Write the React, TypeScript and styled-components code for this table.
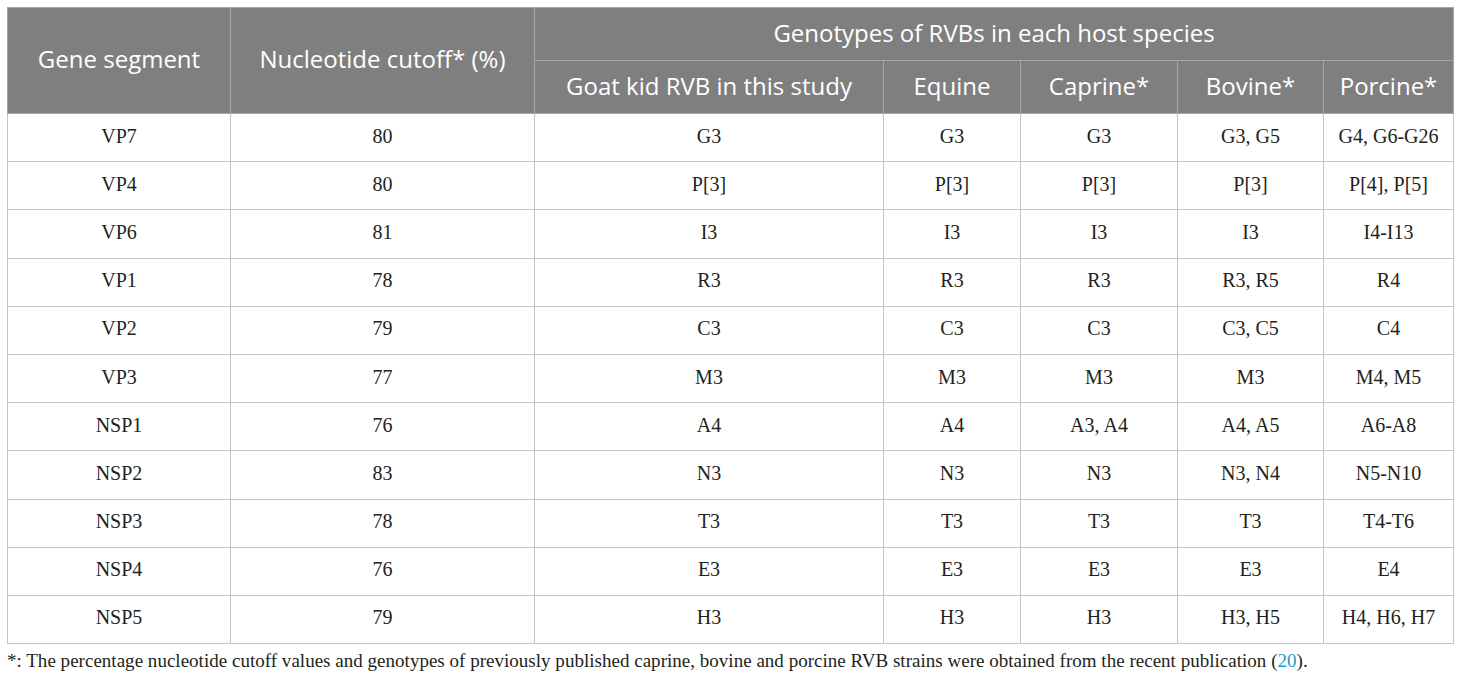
import React from "react";
import styled, { createGlobalStyle } from "styled-components";

const GlobalStyle = createGlobalStyle`
  html, body { margin: 0; padding: 0; background: #ffffff; }
  body { font-family: "Liberation Serif", "Times New Roman", serif; }
`;

const Page = styled.div`
  padding: 7px 7px 0 7px;
  width: 1446px;
`;

const Table = styled.table`
  width: 1446px;
  border-collapse: collapse;
  table-layout: fixed;
  border: 1px solid #c4c4c4;
`;

const HeadCell = styled.th<{ $h: number }>`
  background: #7f7f7f;
  color: #ffffff;
  font-family: "Open Sans", "Noto Sans", sans-serif;
  font-weight: 400;
  font-size: 24px;
  letter-spacing: 0;
  height: ${(p) => p.$h}px;
  padding: 0 4px 4px 4px;
  box-sizing: border-box;
  border: 1px solid #a6a6a6;
  text-align: center;
  vertical-align: middle;
  white-space: nowrap;
`;

const Row = styled.tr`
  height: 48.2px;
`;

const Cell = styled.td`
  font-family: "Liberation Serif", "Times New Roman", serif;
  font-size: 20px;
  color: #231f20;
  text-align: center;
  vertical-align: middle;
  border: 1px solid #c4c4c4;
  padding: 0 4px 3px 4px;
  white-space: nowrap;
`;

const Footnote = styled.p`
  margin: 6px 0 0 0;
  font-family: "Liberation Serif", "Times New Roman", serif;
  font-size: 19px;
  color: #231f20;
  white-space: nowrap;
  letter-spacing: 0.02px;
`;

const Ref = styled.a`
  color: #1e9bc4;
  text-decoration: none;
`;

const widths = [223, 304, 349, 137, 157, 146, 130];

const rows: string[][] = [
  ["VP7", "80", "G3", "G3", "G3", "G3, G5", "G4, G6-G26"],
  ["VP4", "80", "P[3]", "P[3]", "P[3]", "P[3]", "P[4], P[5]"],
  ["VP6", "81", "I3", "I3", "I3", "I3", "I4-I13"],
  ["VP1", "78", "R3", "R3", "R3", "R3, R5", "R4"],
  ["VP2", "79", "C3", "C3", "C3", "C3, C5", "C4"],
  ["VP3", "77", "M3", "M3", "M3", "M3", "M4, M5"],
  ["NSP1", "76", "A4", "A4", "A3, A4", "A4, A5", "A6-A8"],
  ["NSP2", "83", "N3", "N3", "N3", "N3, N4", "N5-N10"],
  ["NSP3", "78", "T3", "T3", "T3", "T3", "T4-T6"],
  ["NSP4", "76", "E3", "E3", "E3", "E3", "E4"],
  ["NSP5", "79", "H3", "H3", "H3", "H3, H5", "H4, H6, H7"],
];

export default function App() {
  return (
    <>
      <GlobalStyle />
      <Page>
        <Table>
          <colgroup>
            {widths.map((w, i) => (
              <col key={i} style={{ width: w }} />
            ))}
          </colgroup>
          <thead>
            <tr>
              <HeadCell $h={53} rowSpan={2}>Gene segment</HeadCell>
              <HeadCell $h={53} rowSpan={2}>Nucleotide cutoff* (%)</HeadCell>
              <HeadCell $h={53} colSpan={5}>Genotypes of RVBs in each host species</HeadCell>
            </tr>
            <tr>
              <HeadCell $h={53}>Goat kid RVB in this study</HeadCell>
              <HeadCell $h={53}>Equine</HeadCell>
              <HeadCell $h={53}>Caprine*</HeadCell>
              <HeadCell $h={53}>Bovine*</HeadCell>
              <HeadCell $h={53}>Porcine*</HeadCell>
            </tr>
          </thead>
          <tbody>
            {rows.map((r) => (
              <Row key={r[0]}>
                {r.map((c, i) => (
                  <Cell key={i}>{c}</Cell>
                ))}
              </Row>
            ))}
          </tbody>
        </Table>
        <Footnote>
          *: The percentage nucleotide cutoff values and genotypes of previously published caprine, bovine and porcine RVB strains were obtained from the recent publication (<Ref href="#">20</Ref>).
        </Footnote>
      </Page>
    </>
  );
}
